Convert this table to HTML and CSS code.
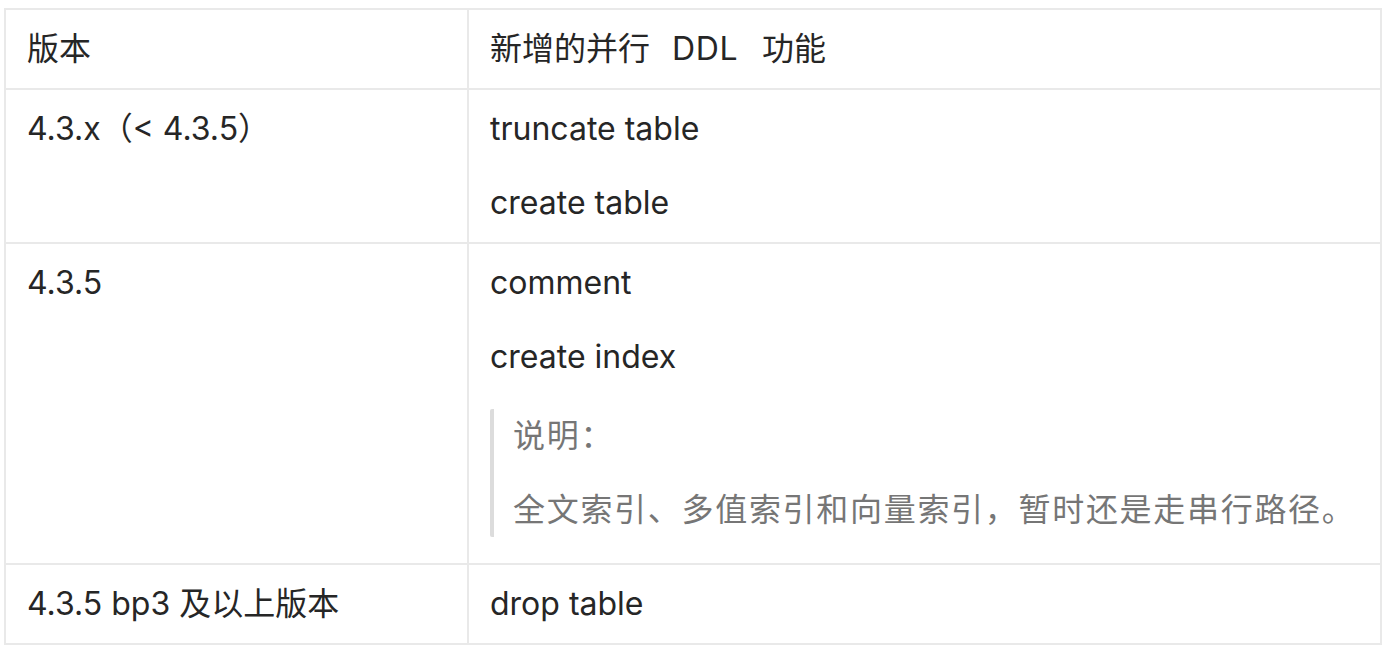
FILE: index.html
```html
<!DOCTYPE html>
<html lang="zh-CN">
<head>
<meta charset="utf-8">
<title>并行 DDL 版本</title>
<link rel="stylesheet" href="styles.css">
</head>
<body>
<table class="ddl-table">
  <colgroup>
    <col class="col-version">
    <col class="col-feature">
  </colgroup>
  <thead>
    <tr>
      <th>版本</th>
      <th>新增的并行&nbsp; <span class="term">DDL</span>&nbsp; 功能</th>
    </tr>
  </thead>
  <tbody>
    <tr>
      <td><p>4.3.x（&lt; 4.3.5）</p></td>
      <td>
        <p>truncate table</p>
        <p>create table</p>
      </td>
    </tr>
    <tr>
      <td><p>4.3.5</p></td>
      <td>
        <p>comment</p>
        <p>create index</p>
        <blockquote class="note">
          <p>说明：</p>
          <p>全文索引、多值索引和向量索引，暂时还是走串行路径。</p>
        </blockquote>
      </td>
    </tr>
    <tr>
      <td><p>4.3.5 bp3 及以上版本</p></td>
      <td><p>drop table</p></td>
    </tr>
  </tbody>
</table>
</body>
</html>
```

FILE: styles.css
```css
html, body {
  margin: 0;
  padding: 0;
  background: #ffffff;
}

body {
  font-family: Inter, "Noto Sans CJK SC", sans-serif;
  font-size: 32px;
  color: #262626;
}

.ddl-table {
  margin: 8px 0 0 4px;
  width: 1378px;
  table-layout: fixed;
  border-collapse: separate;
  border-spacing: 0;
  border-top: 2px solid #e9e9e9;
  border-left: 2px solid #e9e9e9;
}

.col-version { width: 463px; }
.col-feature { width: 913px; }

.ddl-table th,
.ddl-table td {
  text-align: left;
  vertical-align: top;
  font-weight: 400;
  line-height: 48px;
  padding: 15px 20px 15px 21px;
  border-right: 2px solid #e9e9e9;
  border-bottom: 2px solid #e9e9e9;
}

.term {
  margin: 0 6px 0 4px;
  letter-spacing: 0.6px;
}

.ddl-table p {
  margin: 0;
}

.ddl-table p + p {
  margin-top: 26px;
}

.note {
  margin: 28px 0 11px 0;
  padding: 3px 0 3px 19px;
  border-left: 4px solid #dcdcdc;
  border-radius: 2px;
  color: #767676;
  letter-spacing: 1.7px;
}
```
